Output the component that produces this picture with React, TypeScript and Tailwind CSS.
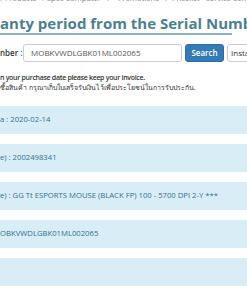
import React from "react";

const font = { fontFamily: "'Open Sans', 'Noto Sans', sans-serif" };

export default function App() {
  const boxes = [
    "a : 2020-02-14",
    "e) : 2002498341",
    "e) : GG Tt ESPORTS MOUSE (BLACK FP) 100 - 5700 DPI 2-Y ***",
    "OBKVWDLGBK01ML002065",
    "",
  ];
  return (
    <div className="w-[247px] h-[296px] overflow-hidden bg-white" style={font}>
      <div className="-mt-[7px] h-[10px] flex items-end whitespace-nowrap text-[7.5px] leading-[10px] text-[#888]">
        <span className="shrink-0 w-[47px]">r Products<span className="ml-[5px]">▾</span></span>
        <span className="shrink-0 w-[71px]">Spec Computer<span className="ml-[5px]">▾</span></span>
        <span className="shrink-0 w-[54px]">Promotions<span className="ml-[5px]">▾</span></span>
        <span className="shrink-0 w-[34px]">Pricelist</span>
        <span className="shrink-0">Service Center</span>
      </div>
      <div className="mt-[11px] w-[232px] border-b-2 border-[#8fb0bc]">
        <h1 className="whitespace-nowrap text-[15px] leading-[19px] font-bold text-[#4e7f8f]">
          anty period from the Serial Number
        </h1>
      </div>
      <div className="mt-[9px] flex items-center whitespace-nowrap">
        <span className="shrink-0 w-[23px] text-[8px] text-[#333] font-semibold">nber :</span>
        <div className="shrink-0 w-[159px] h-[18px] border border-[#ccc] rounded-[3px] flex items-center pl-[7px] text-[8px] text-[#555]">
          MOBKVWDLGBK01ML002065
        </div>
        <button className="shrink-0 ml-[3px] w-[39px] h-[18px] rounded-[3px] bg-[#337ab7] border border-[#2e6da4] text-white text-[8px] font-semibold">
          Search
        </button>
        <button className="shrink-0 ml-[3px] w-[40px] h-[18px] rounded-[3px] bg-white border border-[#ccc] text-[#333] text-[8px] text-left pl-[3px]">
          Installation
        </button>
      </div>
      <div className="mt-[11px] text-[#333] whitespace-nowrap">
        <div className="h-[10px] text-[7px] leading-[10px] tracking-[-0.3px] font-semibold">
          n your purchase date please keep your invoice.
        </div>
        <div className="h-[10px] text-[7px] leading-[10px]">
          ซื้อสินค้า กรุณาเก็บใบเสร็จรับเงินไว้เพื่อประโยชน์ในการรับประกัน.
        </div>
      </div>
      <div className="mt-[13px] flex flex-col gap-[10px]">
        {boxes.map((b, i) => (
          <div
            key={i}
            className="h-[28px] bg-[#d9edf7] flex items-center text-[7.7px] text-[#31708f] whitespace-nowrap"
          >
            {b}
          </div>
        ))}
      </div>
    </div>
  );
}
